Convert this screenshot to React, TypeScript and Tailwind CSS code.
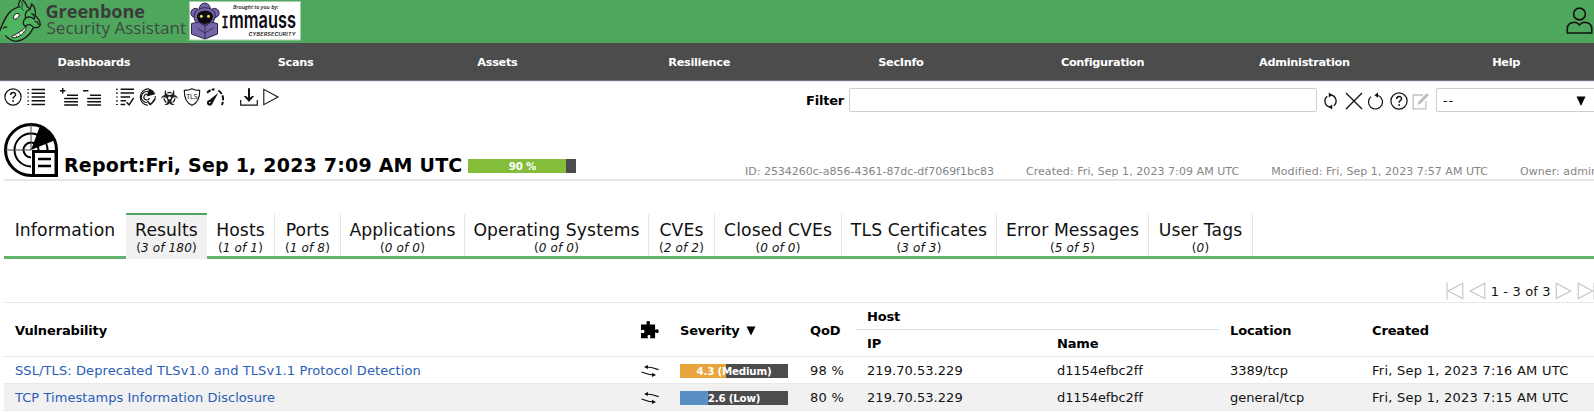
import type { ReactNode } from "react";
import { FaBiohazard } from "react-icons/fa";

function Icon({ children, className = "" }: { children: ReactNode; className?: string }) {
  return (
    <svg
      viewBox="0 0 18 18"
      className={`h-[18px] w-[18px] shrink-0 ${className}`}
      fill="none"
      stroke="#111"
      strokeWidth="1.1"
    >
      {children}
    </svg>
  );
}

const HelpIcon = () => (
  <Icon>
    <circle cx="9" cy="9" r="8.1" strokeWidth="1.2" />
    <path d="M6.6 7.1c0-3.4 5-3.3 5-.5 0 1.9-2.5 2-2.5 4.1" strokeWidth="1.5" />
    <circle cx="9.1" cy="13" r=".9" fill="#111" stroke="none" />
  </Icon>
);

const ListIcon = () => (
  <Icon>
    <path d="M4.600 1.500H18M4.600 5.200H18M4.600 9H18M4.600 12.800H18M4.600 16.500H18" strokeWidth="1.500" />
    <path d="M.4 1.500h1.6M.4 5.200h1.6M.4 9h1.6M.4 12.800h1.6M.4 16.500h1.6" strokeWidth="1.200" />
  </Icon>
);

const AddListIcon = () => (
  <Icon>
    <path d="M0 2.7h5.4M2.7 0v5.4M7 7.3h11M4.2 10.5H18M4.2 13.8H18M4.2 17H18" strokeWidth="1.4" />
  </Icon>
);

const RemoveListIcon = () => (
  <Icon>
    <path d="M0 2.7h5.4M7 7.3h11M4.2 10.5H18M4.2 13.8H18M4.2 17H18" strokeWidth="1.4" />
  </Icon>
);

const ResultsIcon = () => (
  <Icon>
    <path d="M4.600 1.300H18M4.600 5.100H18M4.600 9h9.500M4.600 12.800h5.500M4.600 16.500h4.500" strokeWidth="1.500" />
    <path d="M0 1.300h1.8M0 5.100h1.8M0 9h1.8M0 12.800h1.8M0 16.500h1.8" strokeWidth="1.200" />
    <path d="M10.5 14.2l2.6 2.6L17.6 10" strokeWidth="1.4" />
  </Icon>
);

const VulnIcon = () => (
  <Icon>
    <path d="M11 .9A8.200 8.200 0 1 0 10 17.300M17.200 8a8.200 8.200 0 0 1-.6 4M10.300 3.700A5.500 5.500 0 1 0 9 14.500M9.400 6.200A2.900 2.900 0 1 0 11.500 10" strokeWidth="1.100" />
    <path d="M8.6 8.6L11 .8a8.400 8.400 0 0 1 6.200 5.500z" fill="#111" stroke="none" />
    <path d="M9.500 13.200l2.700 3.300c1.800-1 3.600-3.500 4.800-5.500" strokeWidth="1.500" />
  </Icon>
);

const BiohazardIcon = () => (
  <span className="flex h-[18px] w-[18px] shrink-0 items-center justify-center">
    <FaBiohazard className="h-[17px] w-[17px] text-[#222]" />
  </span>
);

const TlsIcon = () => (
  <Icon>
    <path d="M9 .7C7 1.8 4 2.3 1.3 2.4c-.2 7 1.4 12 7.7 14.9 6.300-2.900 7.900-7.900 7.700-14.900C14 2.300 11 1.800 9 .7z" strokeWidth="1.100" />
    <text x="3.300" y="10.900" fontSize="6.600" textLength="11.400" fontFamily="DejaVu Sans" fill="#111" stroke="none">TLS</text>
  </Icon>
);

const GaugeIcon = () => (
  <Icon>
    <path d="M1 4.700C3.200 2.700 5.400 1.600 8.500 1.300" strokeWidth="2" strokeDasharray="4.400 1.200" />
    <path d="M12.300 2.500c4.400 2.600 6.300 8.700 3.500 14.500" strokeWidth="2" strokeDasharray="5 1.500" />
    <path d="M12.400 4.800L6 16.200a2.600 2.600 0 1 1-3.300-3.600z" fill="#111" stroke="none" />
    <circle cx="3.800" cy="14.600" r="2.700" fill="#111" stroke="none" />
    <circle cx="3.800" cy="14.600" r=".800" fill="#fff" stroke="none" />
  </Icon>
);

const DownloadIcon = () => (
  <Icon>
    <path d="M.700 12v5.200h16.600V12" strokeWidth="1.200" />
    <path d="M9 .300v11" strokeWidth="2" />
    <path d="M3.800 8h2.200L9 10.500 12 8h2.200L9 14z" fill="#111" stroke="none" />
  </Icon>
);

const PlayIcon = () => (
  <Icon>
    <path d="M1.800 1.300v15.400L16 9z" />
  </Icon>
);

const RefreshIcon = () => (
  <Icon>
    <path d="M7.800 15A6.100 6.100 0 0 1 5.300 4.200M9.200 3A6.100 6.100 0 0 1 11.700 13.800" strokeWidth="1.300" />
    <path d="M6.800.600v4.800L10.400 3zM10.200 12.600v4.800L6.600 15z" fill="#111" stroke="none" />
  </Icon>
);

const CloseIcon = () => (
  <Icon>
    <path d="M1 1l16 16M17 1L1 17" strokeWidth="1.300" />
  </Icon>
);

const ResetIcon = () => (
  <Icon>
    <path d="M4 4.600a7 7 0 1 0 6.500-1.300" strokeWidth="1.200" />
    <path d="M11 .600v5.200L7.400 3.200z" fill="#111" stroke="none" />
  </Icon>
);

const EditIcon = () => (
  <Icon>
    <path d="M11 3H1.200v13.800h12.600V9" stroke="#c0c0c0" strokeWidth="1.300" />
    <path d="M5.600 12.900l.9-3.500L14.800 1.100l2.200 2.200-8.300 8.500z" fill="#c0c0c0" stroke="none" />
  </Icon>
);

const PuzzleIcon = () => (
  <Icon>
    <path
      d="M0 3.500h5.600C6 2.600 5.300 2.200 5.400 1.300 5.600-.4 8.800-.4 9 1.300c.1.900-.6 1.300-.2 2.200h5.300v5.200c1 .4 1.300-.5 2.200-.4 1.900.200 1.900 3.500 0 3.700-.9.100-1.200-.8-2.200-.4v5.600H9.200c-.5-1 .4-1.300.3-2.100-.2-1.500-2.800-1.500-3 0-.1.800.8 1.100.3 2.100H0v-5.300c1-.5 1.300.4 2.200.300 1.700-.200 1.700-3.200 0-3.400-.9-.100-1.200.8-2.200.300z"
      fill="#000"
      stroke="none"
    />
  </Icon>
);

const SolutionIcon = () => (
  <Icon>
    <path d="M4.500 5c4.500-.2 8.500.700 13 2.600M.5 10c4.400 1.900 8.500 2.800 13 2.800" strokeWidth="1.200" />
    <path d="M3 4.900L7 2.900v4.200zM15 12.900L11 10.800V15z" fill="#111" stroke="none" />
  </Icon>
);

function PageArrow({ flip = false, bar = false }: { flip?: boolean; bar?: boolean }) {
  return (
    <Icon className={flip ? "-scale-x-100" : ""}>
      <path d="M1.200 1.200v15.400L15.800 9z" stroke="#c4c4c4" />
      {bar && <path d="M17 .600v17" stroke="#c4c4c4" />}
    </Icon>
  );
}

const GreenboneLogo = () => (
  <svg viewBox="0 0 189 43" className="h-[43px] w-[189px] shrink-0">
    <g transform="scale(.3333)" stroke="#1c1c1c" strokeWidth="4" fill="none" strokeLinejoin="round">
      <path
        d="M-3 98C8 70 18 44 34 32C43 25 50 24 57 20C54 12 58 4 64-4C72 2 78 10 81 20C86 22 88 25 90 29L95 12C105 22 108 34 105 46C113 54 121 64 121 74C117 84 110 84 101 82C91 102 75 121 48 124C32 122 24 116 16 106"
        fill="#4fb45f"
      />
      <path d="M90 29C78 31 73 42 77 54C69 63 66 73 76 79C84 71 93 72 101 82M94 40c8 4 12 12 8 20M77 54c9-5 18-4 26 4M104 64c8 1 12 5 12 11" />
      <path d="M58 20c5 3 10 7 12 12M66 4c1 9 1 14 0 18" strokeWidth="3" />
      <path d="M34 110C52 100 68 92 78 80C80 92 66 108 46 113C40 114 36 113 34 110z" fill="#fff" strokeWidth="3" />
      <path d="M47 105l3 6M57 99l4 7M67 92l5 7" strokeWidth="2" />
      <path d="M40 56C41 44 48 38 57 41C60 51 51 60 40 56z" fill="#fff" strokeWidth="3" />
      <path d="M9 86c3-5 8-7 12-3" />
    </g>
    <text x="45.500" y="17.500" fontFamily="Open Sans" fontWeight="700" fontSize="17.300" textLength="99.500" lengthAdjust="spacingAndGlyphs" fill="#3b3b3b">
      Greenbone
    </text>
    <text x="46.500" y="34.400" fontFamily="Open Sans" fontSize="16.600" textLength="139.500" lengthAdjust="spacingAndGlyphs" fill="#3f4a41">
      Security Assistant
    </text>
  </svg>
);

const ImmaussLogo = () => (
  <svg viewBox="0 0 112 40" className="h-[40px] w-[112px] shrink-0">
    <rect x=".5" y=".5" width="111" height="38.500" fill="#fff" stroke="#a9cfae" strokeWidth="1" />
    <g stroke="#2a2440" strokeWidth="1">
      <circle cx="6.500" cy="12" r="4.600" fill="#7465a8" />
      <circle cx="25.500" cy="12" r="4.600" fill="#7465a8" />
      <circle cx="15.800" cy="7.500" r="5.400" fill="#7465a8" />
      <path d="M6 12C8 5 24 5 26 12C27 18 24 22 21 24H10C6 22 4 17 6 12z" fill="#7465a8" />
      <path d="M2.500 22.500L10 21l6 4 6-4 6.500 1.500V33L16 38 2.500 33z" fill="#7465a8" />
      <path d="M16 25v12M8 27l8 5 8-5" fill="none" strokeWidth=".800" />
    </g>
    <path d="M8 15C9 8 23 8 24 15C24.500 19 20 23 15.800 23C11 23 7.500 19 8 15z" fill="#0c0a12" />
    <circle cx="12.300" cy="15.300" r="1.500" fill="#f0e23a" />
    <circle cx="19.500" cy="15.300" r="1.500" fill="#f0e23a" />
    <text x="44" y="7.500" fontFamily="Open Sans" fontStyle="italic" fontWeight="600" fontSize="5.400" textLength="45.500" fill="#111">
      Brought to you by:
    </text>
    <text x="32.500" y="27" fontFamily="DejaVu Sans Mono" fontSize="16.500" fontWeight="400" textLength="7" lengthAdjust="spacingAndGlyphs" fill="#0c0a12" stroke="#0c0a12" strokeWidth=".6">
      I
    </text>
    <text x="40" y="27" fontFamily="Inter" fontSize="22.500" fontWeight="600" textLength="67" lengthAdjust="spacingAndGlyphs" fill="#0c0a12">
      mmauss
    </text>
    <text x="59.500" y="34.500" fontFamily="Inter" fontWeight="600" fontStyle="italic" fontSize="5.400" textLength="47" fill="#222">
      CYBERSECURITY
    </text>
  </svg>
);

const UserIcon = () => (
  <svg viewBox="0 0 27 27" className="h-[27px] w-[27px] shrink-0" fill="none" stroke="#111" strokeWidth="1.600">
    <circle cx="13.500" cy="7" r="5.900" />
    <path d="M1.300 26v-4.500C1.300 17.500 4.500 15.500 9 15.300c1.700.2 3 .9 4.500 2.700 1.500-1.800 2.800-2.500 4.500-2.700 4.500.200 7.700 2.200 7.700 6.200V26z" />
  </svg>
);

const ReportIcon = () => (
  <svg viewBox="0 0 54 54" className="h-[54px] w-[54px] shrink-0" fill="none" stroke="#000">
    <path d="M27 52.500A25.500 25.500 0 1 1 52.500 27v25.500z" strokeWidth="3" />
    <path d="M27 43.500A16.500 16.500 0 1 1 43.500 27M27 34.500A7.500 7.500 0 1 1 34.500 27" strokeWidth="2" />
    <path d="M27 1v26M1 27h26" stroke="#444" strokeWidth="1" />
    <path d="M27 27L36 3C43 5 49 10 51.500 17z" fill="#000" stroke="none" />
    <rect x="29.500" y="28.500" width="22.500" height="24" fill="#fff" strokeWidth="3" />
    <path d="M34 36h13M34 43h13" strokeWidth="2.600" />
  </svg>
);

function Bar({ fill, color, label }: { fill: number; color: string; label: string }) {
  return (
    <div className="relative h-[14px] w-[108px] shrink-0 bg-[#4c4c4c]">
      <div className={`h-full ${color}`} style={{ width: `${fill}%` }} />
      <span className="absolute inset-0 text-center text-[10.300px] leading-[15px] font-bold tracking-[-0.200px] text-white">
        {label}
      </span>
    </div>
  );
}

const menu = ["Dashboards", "Scans", "Assets", "Resilience", "SecInfo", "Configuration", "Administration", "Help"];

const tabs = [
  { name: "Information", width: "w-[122px]" },
  { name: "Results", count: "3 of 180", width: "w-[81px]", active: true },
  { name: "Hosts", count: "1 of 1", width: "w-[68px]" },
  { name: "Ports", count: "1 of 8", width: "w-[66px]" },
  { name: "Applications", count: "0 of 0", width: "w-[124px]" },
  { name: "Operating Systems", count: "0 of 0", width: "w-[184px]" },
  { name: "CVEs", count: "2 of 2", width: "w-[66px]" },
  { name: "Closed CVEs", count: "0 of 0", width: "w-[127px]" },
  { name: "TLS Certificates", count: "3 of 3", width: "w-[155px]" },
  { name: "Error Messages", count: "5 of 5", width: "w-[152px]" },
  { name: "User Tags", count: "0", width: "w-[104px]" },
];

const columns = "grid grid-cols-[626px_39px_130px_57px_190px_173px_142px_1fr]";

const rows = [
  {
    name: "SSL/TLS: Deprecated TLSv1.0 and TLSv1.1 Protocol Detection",
    tracking: "tracking-[0.100px]",
    severity: "4.3 (Medium)",
    fill: 43,
    color: "bg-[#e8a53c]",
    qod: "98 %",
    location: "3389/tcp",
    created: "Fri, Sep 1, 2023 7:16 AM UTC",
    background: "bg-white",
  },
  {
    name: "TCP Timestamps Information Disclosure",
    tracking: "tracking-[0.050px]",
    severity: "2.6 (Low)",
    fill: 26,
    color: "bg-[#5a8fc4]",
    qod: "80 %",
    location: "general/tcp",
    created: "Fri, Sep 1, 2023 7:15 AM UTC",
    background: "bg-[#f1f1f1]",
  },
];

export default function App() {
  return (
    <div className="flex h-[412px] w-[1594px] flex-col overflow-hidden bg-white font-['DejaVu_Sans',sans-serif] text-[13px] whitespace-nowrap text-[#111]">
      <header className="flex h-[43px] shrink-0 justify-between bg-[#4ea75c]">
        <div className="flex">
          <GreenboneLogo />
          <div className="pt-px">
            <ImmaussLogo />
          </div>
        </div>
        <div className="pt-[7px] pr-[1px]">
          <UserIcon />
        </div>
      </header>

      <nav className="h-[38px] shrink-0 border-b border-[#77737c] bg-[#4c4c4c]">
        <ul className="-ml-[7px] flex w-[1614px]">
          {menu.map((item) => (
            <li key={item} className="flex-1 text-center text-[11.300px] leading-[39px] font-bold tracking-[-0.300px] text-white">
              {item}
            </li>
          ))}
        </ul>
      </nav>

      <div className="flex h-[42px] shrink-0 justify-between border-t border-[#dfe8f6] pt-[6px] pl-[4px]">
        <div className="flex">
          <div className="flex gap-[4.500px]">
            <HelpIcon />
            <ListIcon />
          </div>
          <div className="ml-[15.500px] flex gap-[4.500px]">
            <AddListIcon />
            <RemoveListIcon />
          </div>
          <div className="ml-[15px] flex gap-[4.500px]">
            <ResultsIcon />
            <VulnIcon />
            <BiohazardIcon />
            <TlsIcon />
            <GaugeIcon />
          </div>
          <div className="ml-[16px] flex gap-[4.500px]">
            <DownloadIcon />
            <PlayIcon />
          </div>
        </div>
        <div className="flex h-[24px] items-center">
          <span className="mr-[5px] pt-[2px] text-[13px] font-bold tracking-[-0.200px] text-black">Filter</span>
          <div className="h-[24px] w-[468px] rounded-[2px] border border-[#cfcfcf]" />
          <div className="ml-[5px] flex gap-[4.500px] pt-px">
            <RefreshIcon />
            <CloseIcon />
            <ResetIcon />
            <HelpIcon />
            <EditIcon />
          </div>
          <div className="ml-[6px] flex h-[24px] w-[158px] items-center justify-between rounded-l-[2px] border border-r-0 border-[#cfcfcf] pt-px pr-[8px] pl-[6px]">
            <span className="tracking-[0.800px]">--</span>
            <svg viewBox="0 0 10 10" className="h-[10px] w-[10px] fill-black">
              <path d="M.500.500h9L5 10z" />
            </svg>
          </div>
        </div>
      </div>

      <section className="ml-[4px] flex h-[58px] shrink-0 border-b-2 border-[#e6e6e6]">
        <ReportIcon />
        <h1 className="ml-[6px] pt-[30px] text-[19px] leading-[24px] font-bold tracking-[0.200px] text-black">
          Report:Fri, Sep 1, 2023 7:09 AM UTC
        </h1>
        <div className="ml-[6px] pt-[36px]">
          <Bar fill={90} color="bg-[#83bd3a]" label="90 %" />
        </div>
        <div className="ml-auto flex gap-[32px] pt-[42px] text-[11px] leading-[14px] tracking-[0.060px] text-[#858585]">
          <span className="tracking-[-0.010px]">ID: 2534260c-a856-4361-87dc-df7069f1bc83</span>
          <span>Created: Fri, Sep 1, 2023 7:09 AM UTC</span>
          <span>Modified: Fri, Sep 1, 2023 7:57 AM UTC</span>
          <span className="w-[74px]">Owner: admin</span>
        </div>
      </section>

      <div className="mt-[32px] ml-[4px] flex h-[46px] shrink-0">
        {tabs.map((tab, i) => (
          <div
            key={tab.name}
            className={`flex shrink-0 flex-col ${tab.width} ${
              tab.active
                ? "border-t-[2px] border-t-[#4ea75c] bg-[#f1f1f1]"
                : "border-b-[3px] border-b-[#62b26e] pt-[1px]"
            }`}
          >
            <div
              className={`flex-1 text-center ${tab.active ? "pt-[5px]" : "pt-[6px]"} ${
                i > 1 ? "border-r border-[#e6e6e6]" : ""
              }`}
            >
              <div className="text-[17.200px] leading-[20px] tracking-[0.100px]">{tab.name}</div>
              {tab.count && (
                <div className="text-[12px] leading-[16px] tracking-[0.140px]">
                  (<i>{tab.count}</i>)
                </div>
              )}
            </div>
          </div>
        ))}
        <div className="flex-1 border-b-[3px] border-b-[#62b26e]" />
      </div>

      <div className="flex h-[43px] shrink-0 items-start justify-end pt-[23px]">
        <div className="-mr-[1px] flex gap-[4.200px]">
          <PageArrow flip bar />
          <PageArrow flip />
          <span className="leading-[20px] tracking-[0.140px]">1 - 3 of 3</span>
          <PageArrow />
          <PageArrow bar />
        </div>
      </div>

      <div className="ml-[4px] shrink-0">
        <div className={`${columns} h-[54px] items-center border-t border-[#e8e8e8] font-bold tracking-[-0.150px] text-black`}>
          <div className="pt-[2px] pl-[11px]">Vulnerability</div>
          <div className="pl-[11px]">
            <PuzzleIcon />
          </div>
          <div className="flex items-center gap-[7px] pt-[2px] pl-[11px] tracking-[-0.200px]">
            Severity
            <svg viewBox="0 0 10 10" className="h-[10px] w-[10px] fill-black">
              <path d="M.500.500h9L5 9.500z" />
            </svg>
          </div>
          <div className="pt-[2px] pl-[11px]">QoD</div>
          <div className="col-span-2">
            <div className="h-[27px] border-b border-[#dedede] pl-[11px] leading-[27px]">Host</div>
            <div className="grid h-[26px] grid-cols-[190px_1fr] leading-[27px]">
              <div className="pl-[11px]">IP</div>
              <div className="pl-[11px]">Name</div>
            </div>
          </div>
          <div className="pt-[2px] pl-[11px]">Location</div>
          <div className="pt-[2px] pl-[11px]">Created</div>
        </div>
        {rows.map((row) => (
          <div key={row.name} className={`${columns} h-[27px] items-center border-t border-[#e8e8e8] leading-[27px] ${row.background}`}>
            <div className={`pl-[11px] text-[#2a5db5] ${row.tracking}`}>{row.name}</div>
            <div className="pl-[11px]">
              <SolutionIcon />
            </div>
            <div className="pl-[11px]">
              <Bar fill={row.fill} color={row.color} label={row.severity} />
            </div>
            <div className="pl-[11px] tracking-[0.250px]">{row.qod}</div>
            <div className="pl-[11px] tracking-[0.050px]">219.70.53.229</div>
            <div className="pl-[11px] tracking-[-0.080px]">d1154efbc2ff</div>
            <div className="pl-[11px]">{row.location}</div>
            <div className="pl-[11px] tracking-[0.250px]">{row.created}</div>
          </div>
        ))}
        <div className="border-t border-[#e8e8e8]" />
      </div>
    </div>
  );
}
